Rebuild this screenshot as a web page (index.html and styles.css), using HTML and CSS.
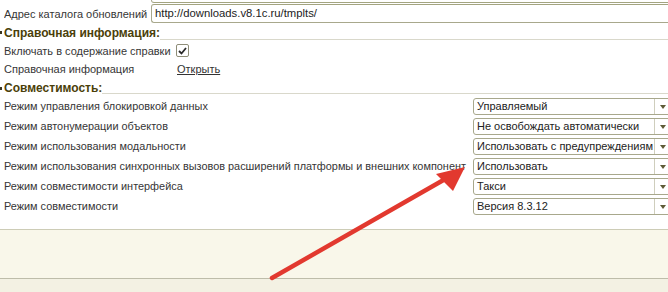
FILE: index.html
```html
<!DOCTYPE html>
<html lang="ru">
<head>
    <meta charset="UTF-8">
    <title>Параметры</title>
    <link rel="stylesheet" href="styles.css">
</head>
<body>

    <!-- Form body -->
    <div class="form">
        <div class="prev-field"></div>

        <div class="row row-addr">
            <span class="label label-addr">Адрес каталога обновлений</span>
            <div class="input">http://downloads.v8.1c.ru/tmplts/</div>
        </div>

        <div class="group group-help">
            <span class="group-mark"></span>
            <span class="group-title">Справочная информация:</span>
            <span class="group-line"></span>
        </div>

        <div class="row row-check">
            <span class="label label-help">Включать в содержание справки</span>
            <span class="checkbox">
                <svg width="9" height="8" viewBox="0 0 9 8"><path d="M1 4 L3.5 6.5 L8 1" fill="none" stroke="#2a2a2a" stroke-width="1.8"/></svg>
            </span>
        </div>

        <div class="row row-link">
            <span class="label label-help">Справочная информация</span>
            <a class="link" href="#">Открыть</a>
        </div>

        <div class="group group-compat">
            <span class="group-mark"></span>
            <span class="group-title">Совместимость:</span>
            <span class="group-line"></span>
        </div>

        <div class="compat">
            <div class="row row-combo">
                <span class="label label-compat">Режим управления блокировкой данных</span>
                <div class="combo"><span class="combo-text">Управляемый</span><span class="combo-btn"></span></div>
            </div>
            <div class="row row-combo">
                <span class="label label-compat">Режим автонумерации объектов</span>
                <div class="combo"><span class="combo-text">Не освобождать автоматически</span><span class="combo-btn"></span></div>
            </div>
            <div class="row row-combo">
                <span class="label label-compat">Режим использования модальности</span>
                <div class="combo"><span class="combo-text">Использовать с предупреждениям</span><span class="combo-btn"></span></div>
            </div>
            <div class="row row-combo">
                <span class="label label-compat">Режим использования синхронных вызовов расширений платформы и внешних компонент</span>
                <div class="combo"><span class="combo-text">Использовать</span><span class="combo-btn"></span></div>
            </div>
            <div class="row row-combo">
                <span class="label label-compat">Режим совместимости интерфейса</span>
                <div class="combo"><span class="combo-text">Такси</span><span class="combo-btn"></span></div>
            </div>
            <div class="row row-combo">
                <span class="label label-compat">Режим совместимости</span>
                <div class="combo"><span class="combo-text">Версия 8.3.12</span><span class="combo-btn"></span></div>
            </div>
        </div>
    </div>

    <!-- Bottom panel -->
    <div class="footer">
        <div class="footer-bar"></div>
    </div>

    <!-- Red annotation arrow -->
    <svg class="arrow" width="668" height="292" viewBox="0 0 668 292">
        <line x1="272" y1="278" x2="447" y2="178" stroke="#e2392f" stroke-width="4.5" stroke-linecap="round"/>
        <polygon points="465,167 436,174 453,191" fill="#e2392f"/>
    </svg>

</body>
</html>
```

FILE: styles.css
```css
/* Page */
body {
    margin: 0;
    width: 668px;
    height: 292px;
    overflow: hidden;
    position: relative;
    background-color: #ffffff;
    font-family: "Liberation Sans", Arial, sans-serif;
    font-size: 11px;
    color: #363636;
}

.form {
    display: flex;
    flex-direction: column;
}

/* Bottom edge of the field above */
.prev-field {
    height: 2px;
    margin-left: 151px;
    margin-bottom: 1px;
    border-left: 1px solid #a8a88c;
    border-bottom: 1px solid #a3a480;
    border-bottom-left-radius: 3px;
}

/* Generic row */
.row {
    display: flex;
    align-items: center;
    padding-left: 4px;
    white-space: nowrap;
}

.label {
    flex: none;
    overflow: hidden;
}

.row-addr {
    height: 19px;
}

.label-addr {
    width: 147px;
}

.input {
    flex: 1;
    height: 17px;
    line-height: 17px;
    padding-left: 3px;
    border: 1px solid #a8a88c;
    border-top-color: #a3a480;
    border-right: none;
    border-radius: 3px 0 0 3px;
    color: #222222;
    font-size: 11.3px;
}

/* Group headers */
.group {
    display: flex;
    align-items: center;
    position: relative;
    padding-left: 4px;
}

.group-help {
    height: 19px;
}

.group-compat {
    height: 17px;
}

.group-title {
    font-weight: bold;
    color: #4b3f0a;
    font-size: 12px;
}

.group-line {
    flex: 1;
    align-self: flex-end;
    height: 0;
    border-top: 1px solid #d9d8cb;
    margin-bottom: 2px;
}

.group-mark {
    position: absolute;
    left: 0;
    top: 8px;
    width: 2px;
    height: 3px;
    background-color: #3a3520;
}

/* Help rows */
.row-check {
    height: 17px;
}

.row-link {
    height: 20px;
}

.label-help {
    width: 172px;
}

.checkbox {
    display: flex;
    align-items: center;
    justify-content: center;
    width: 11px;
    height: 11px;
    border: 1px solid #8e8d78;
    border-radius: 2px;
    background-color: #ffffff;
}

.link {
    margin-left: 1px;
    color: #333333;
    text-decoration: underline;
}

/* Compatibility rows */
.compat {
    display: flex;
    flex-direction: column;
}

.row-combo {
    height: 20px;
}

/* long label runs up to the combo edge, combo covers the rest */
.label-compat {
    width: 469px;
    overflow: visible;
    font-size: 10.9px;
}

.combo {
    position: relative;
    flex: none;
    display: flex;
    width: 196px;
    height: 15px;
    border: 1px solid #a8a88c;
    border-radius: 3px;
    background-color: #ffffff;
    color: #222222;
    font-size: 11px;
}

.combo-text {
    width: 177px;
    padding-left: 3px;
    line-height: 15px;
    overflow: hidden;
    border-right: 1px solid #cfcebd;
}

.combo-btn {
    position: relative;
    flex: 1;
}

.combo-btn::after {
    content: "";
    position: absolute;
    left: 5px;
    top: 6px;
    border-left: 3px solid transparent;
    border-right: 3px solid transparent;
    border-top: 4px solid #5e5a36;
}

/* Bottom panel */
.footer {
    display: flex;
    flex-direction: column;
    margin-top: 13px;
    height: 63px;
    border-top: 1px solid #cdccb6;
    background-color: #f9f7ea;
}

.footer-bar {
    margin-top: 48px;
    flex: 1;
    border-top: 1px solid #bebdaa;
    background-color: #f3f1e3;
}

/* Annotation overlay */
.arrow {
    position: absolute;
    left: 0;
    top: 0;
}
```
